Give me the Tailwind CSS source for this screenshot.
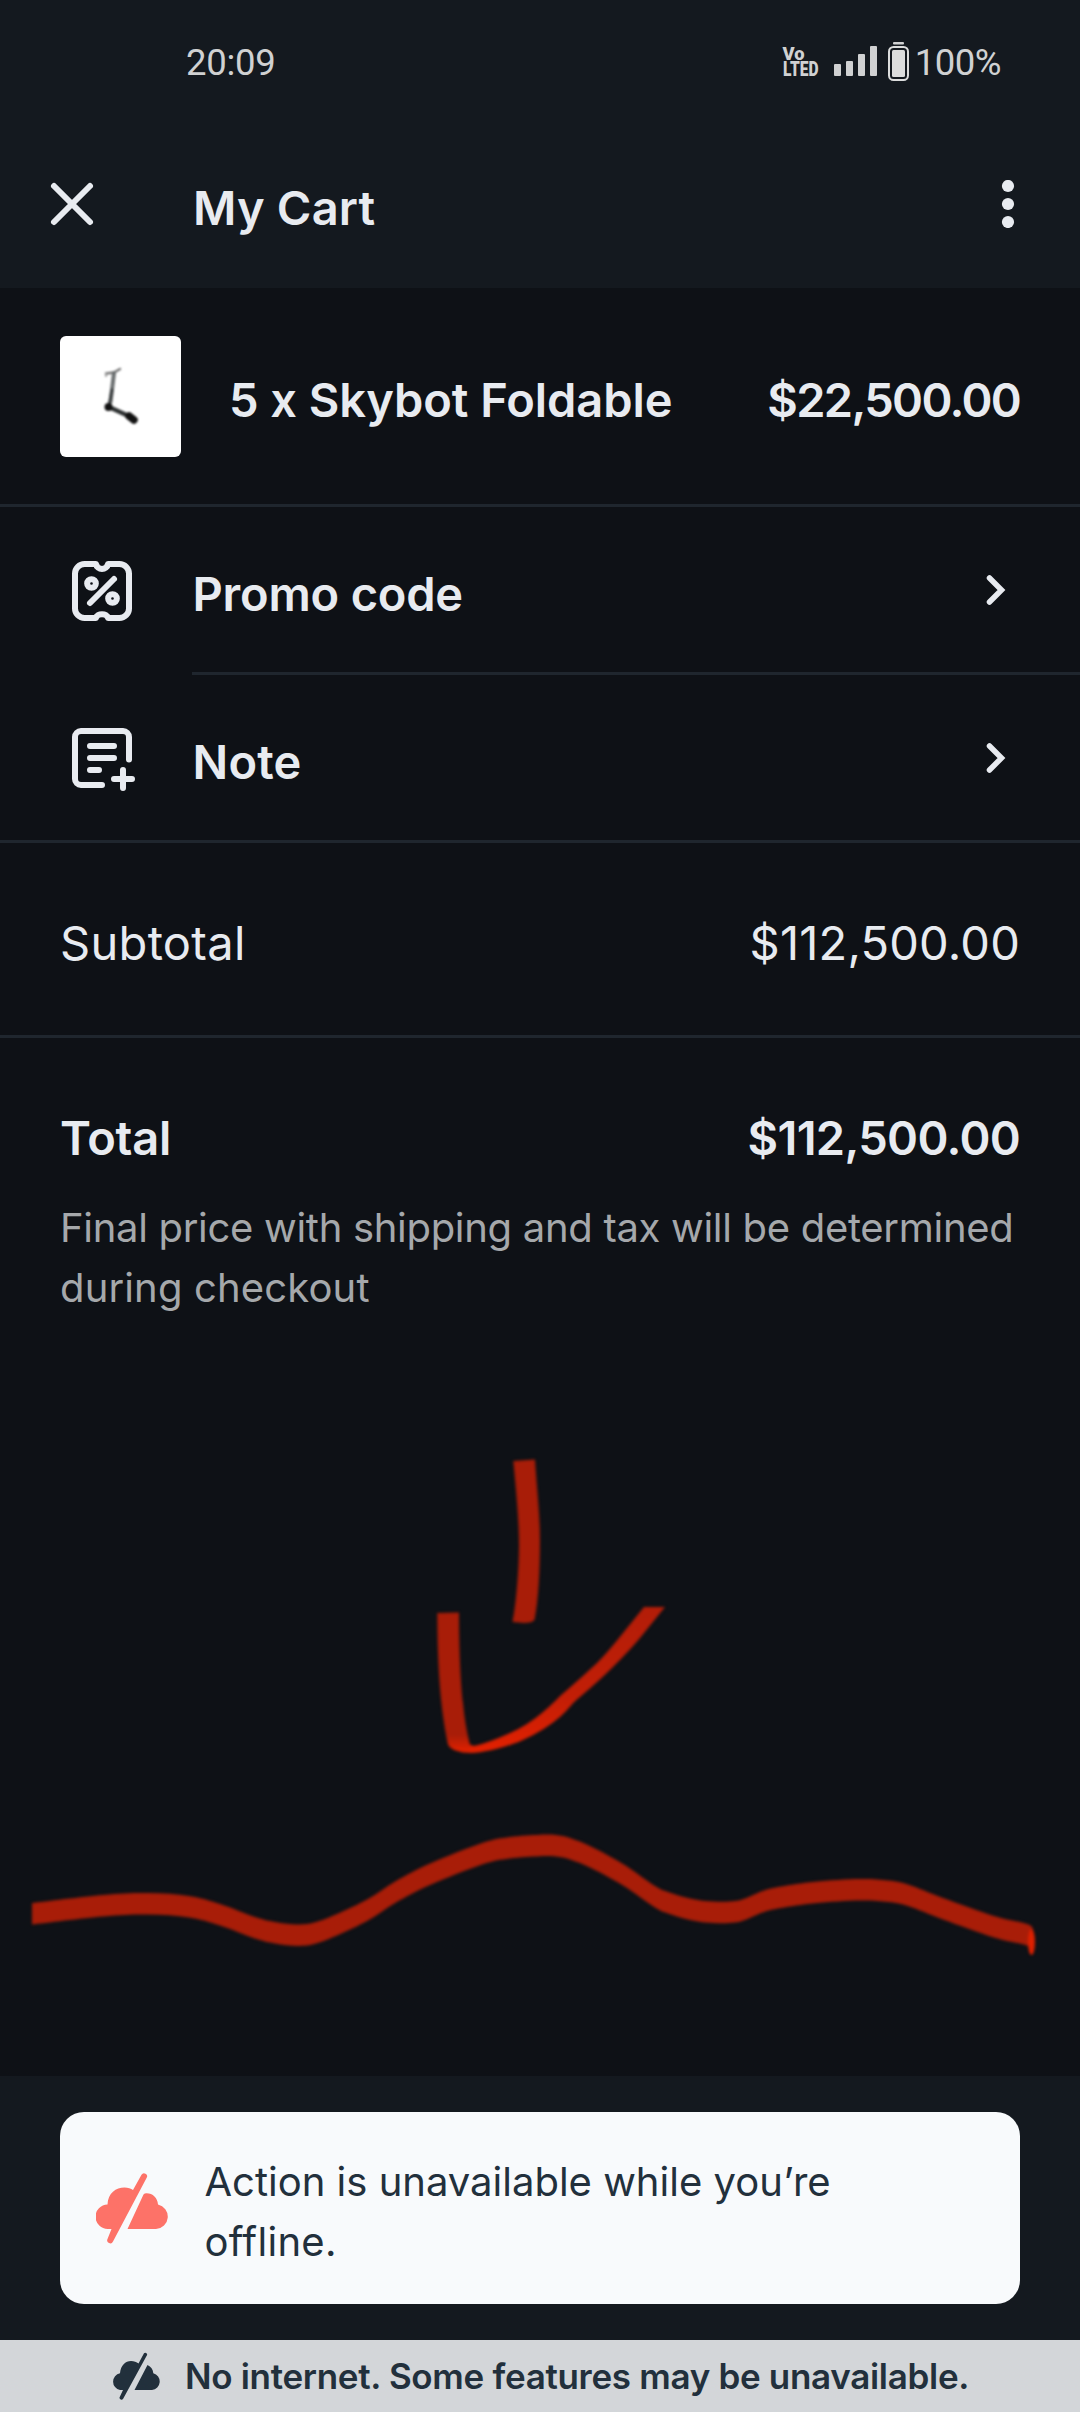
<!DOCTYPE html>
<html lang="en">
<head>
<meta charset="utf-8">
<meta name="viewport" content="width=device-width, initial-scale=1">
<title>My Cart</title>
<script src="https://cdn.jsdelivr.net/npm/@tailwindcss/browser@4"></script>
</head>
<body class="bg-[#0e1116]">
<div class="relative flex h-[2412px] w-[1080px] flex-col overflow-hidden bg-[#0e1116] font-['Inter',sans-serif] text-[47px] leading-[60px] text-[#e8ebf0]">

  <!-- Status bar -->
  <div class="flex h-[125px] shrink-0 items-center justify-between bg-[#14191f] pl-[186px] pr-[79px] font-['Roboto',sans-serif] text-[36.5px] leading-none text-[#d0d1d2]">
    <span class="mt-px tracking-[-0.3px]">20:09</span>
    <div class="flex items-center">
      <svg width="134" height="46" viewBox="780 40 134 46" fill="#d0d1d2" font-family="Roboto" font-weight="900">
        <text x="781.5" y="59.500" font-size="19" textLength="22" lengthAdjust="spacingAndGlyphs">Vo</text>
        <text x="782" y="76" font-size="20" textLength="35.5" lengthAdjust="spacingAndGlyphs">LTED</text>
        <rect x="833" y="64" width="7" height="12" rx="1"/>
        <rect x="845" y="61" width="7" height="15" rx="1"/>
        <rect x="857" y="54" width="7" height="22" rx="1"/>
        <rect x="869" y="46" width="7" height="30" rx="1"/>
        <rect x="892" y="42" width="11" height="2.4" rx="1"/>
        <rect x="888" y="47" width="19" height="33" rx="4.5" fill="none" stroke="#dcdddd" stroke-width="2"/>
        <rect x="891" y="50" width="13" height="27" rx="1.5" fill="#dcdddd"/>
      </svg>
      <span class="mt-px tracking-[-0.5px]">100%</span>
    </div>
  </div>

  <!-- Title bar -->
  <header class="flex h-[163px] shrink-0 items-center bg-[#14191f] pl-12 pr-[60px]">
    <svg class="mb-[5px]" width="48" height="48" viewBox="0 0 48 48" fill="none" stroke="#e8ebf0" stroke-width="6" stroke-linecap="round"><path d="M6 6l36 36M42 6L6 42"/></svg>
    <h1 class="ml-[97px] mt-[3px] font-semibold tracking-[0.200px]">My Cart</h1>
    <svg class="mb-[5px] ml-auto" width="24" height="48" viewBox="0 0 24 48" fill="#e8ebf0"><circle cx="12" cy="6" r="6.1"/><circle cx="12" cy="24" r="6.1"/><circle cx="12" cy="42" r="6.1"/></svg>
  </header>

  <!-- Cart line -->
  <div class="flex h-[219px] shrink-0 items-center border-b-[3px] border-[#1f262e] px-[60px] font-semibold">
    <div class="size-[121px] overflow-hidden rounded-md bg-white">
      <svg width="121" height="121" viewBox="0 0 121 121" fill="none" stroke-linecap="round">
        <g style="filter:blur(1.1px)">
          <path d="M46 37.500L54 36.500L60 33" stroke="#777" stroke-width="2.500"/>
          <path d="M46 37v3" stroke="#999" stroke-width="2"/>
          <path d="M54 37L50.500 66" stroke="#6b6f70" stroke-width="4"/>
          <path d="M52 54L49 70" stroke="#3d4142" stroke-width="3"/>
          <path d="M49 71L73 82" stroke="#2e3132" stroke-width="4.500"/>
          <circle cx="48.500" cy="71" r="4" fill="#111"/>
          <path d="M69 80L74 84" stroke="#111" stroke-width="7.500"/>
        </g>
      </svg>
    </div>
    <span class="ml-[48px] mt-2 tracking-[-0.050px]">5 x Skybot Foldable</span>
    <span class="ml-auto mt-2 tracking-[-1.7px]">$22,500.00</span>
  </div>

  <!-- Promo code -->
  <div class="flex h-[165px] shrink-0 items-center pl-[66px] pr-[69px] font-semibold">
    <svg class="mt-[2px]" width="72" height="72" viewBox="0 0 24 24" fill="none" stroke="#e8ebf0" stroke-width="2" stroke-linecap="round" stroke-linejoin="round">
      <path d="M10 3H6.200A3.200 3.200 0 0 0 3 6.200V17.800A3.200 3.200 0 0 0 6.200 21H10C10.300 19.300 13.700 19.300 14 21H17.800A3.200 3.200 0 0 0 21 17.800V6.200A3.200 3.200 0 0 0 17.800 3H14C13.700 5.200 10.300 5.200 10 3Z"/>
      <path d="M16 8l-8 8"/><circle cx="8.500" cy="9.500" r="1.450"/><circle cx="15.500" cy="14.500" r="1.450"/>
    </svg>
    <span class="ml-[54.500px] mt-2 tracking-[-0.2px]">Promo code</span>
    <svg class="mt-px ml-auto" width="30" height="36" viewBox="0 0 30 36" fill="none" stroke="#e8ebf0" stroke-width="5.500" stroke-linecap="round" stroke-linejoin="miter"><path d="M8.500 6L20.500 18L8.500 30"/></svg>
  </div>
  <div class="ml-48 h-[3px] shrink-0 bg-[#1f262e]"></div>

  <!-- Note -->
  <div class="flex h-[168px] shrink-0 items-center border-b-[3px] border-[#1f262e] pl-[66px] pr-[69px] font-semibold">
    <svg class="mt-px" width="72" height="72" viewBox="0 0 24 24" fill="none" stroke="#e8ebf0" stroke-width="2" stroke-linecap="round" stroke-linejoin="round">
      <path d="M12 21H5A2 2 0 0 1 3 19V5A2 2 0 0 1 5 3H19A2 2 0 0 1 21 5V12.500M8 8H16M8 12H16M8 16H11M19 16V22M16 19H22"/>
    </svg>
    <span class="ml-[54.500px] mt-[9px] tracking-[0.200px]">Note</span>
    <svg class="mt-px ml-auto" width="30" height="36" viewBox="0 0 30 36" fill="none" stroke="#e8ebf0" stroke-width="5.500" stroke-linecap="round" stroke-linejoin="miter"><path d="M8.500 6L20.500 18L8.500 30"/></svg>
  </div>

  <!-- Subtotal -->
  <div class="flex h-[195px] shrink-0 items-center justify-between border-b-[3px] border-[#1f262e] px-[60px]">
    <span class="mt-2 tracking-[0.300px]">Subtotal</span>
    <span class="mt-2 tracking-[0.200px]">$112,500.00</span>
  </div>

  <!-- Total -->
  <div class="flex flex-1 flex-col px-[60px] pt-[70px]">
    <div class="flex justify-between font-semibold">
      <span class="tracking-[-0.200px]">Total</span>
      <span class="tracking-[-0.700px]">$112,500.00</span>
    </div>
    <p class="mt-[30px] text-[40px] tracking-[-0.300px] text-[#a5a8ab]">Final price with shipping and tax will be determined<br><span class="tracking-[0.150px]">during checkout</span></p>
  </div>

  <!-- Offline toast -->
  <div class="h-[264px] shrink-0 bg-[#14191f] px-[60px] py-9">
    <div class="flex h-48 items-center rounded-3xl bg-[#f8fafc] pl-9 text-[#22303c]">
      <svg class="mt-px" width="72" height="72" viewBox="0 0 72 72" fill="#fd7268">
        <path d="M15.500 56H12A12 12 0 0 1 11.500 31.500C12 20 20 14.500 28.500 14.500C32 14.500 35 15.500 37 17L45.500 1.800A3 3 0 0 1 50.800 4.600L17 68.500A3 3 0 0 1 11.500 66Z"/>
        <path d="M31.500 56L47.500 21.500Q48.500 20.300 50.500 20.300C57 20.300 61.500 25 62 31.500A12.400 12.400 0 0 1 60 56Z"/>
      </svg>
      <p class="ml-[36.500px] mt-2 text-[40px] leading-[60px]">Action is unavailable while you’re<br><span class="tracking-[0.300px]">offline.</span></p>
    </div>
  </div>

  <!-- Connection banner -->
  <div class="flex h-[72px] shrink-0 items-center bg-[#d3d6d9] pl-28 text-[35px] font-semibold text-[#22303c]">
    <svg width="48" height="48" viewBox="0 0 48 48" fill="#22303c">
      <path d="M11 38H8A8.500 8.500 0 0 1 8 21.300C8.500 13.500 13.500 9 19 9C22 9 24.500 10 26.500 11.500L32 1.200A2 2 0 0 1 35.200 2.800L11 47A2 2 0 0 1 7.500 45.500Z"/>
      <path d="M22.500 38L35.500 13C39 14.500 41 17.500 41.300 21.300A8.500 8.500 0 0 1 40 38Z"/>
    </svg>
    <span class="ml-[25px] tracking-[-0.310px]">No internet. Some features may be unavailable.</span>
  </div>

  <!-- Freehand markup drawn over the page -->
  <svg class="pointer-events-none absolute left-0 top-[1440px]" width="1080" height="540" viewBox="0 1440 1080 540">
    <defs>
      <linearGradient id="arm" gradientUnits="userSpaceOnUse" x1="0" y1="1610" x2="0" y2="1752"><stop offset="0" stop-color="#b31d08"/><stop offset=".6" stop-color="#c11e06"/><stop offset="1" stop-color="#e22000"/></linearGradient>
      <linearGradient id="left" gradientUnits="userSpaceOnUse" x1="0" y1="1735" x2="0" y2="1750"><stop offset="0" stop-color="#a81d08"/><stop offset="1" stop-color="#dd2000"/></linearGradient>
    </defs>
    <g style="filter:blur(1.8px)">
      <path fill="#a81d08" d="M513.300 1461L535 1459.500C537 1490 540 1515 540 1540C540 1570 538.500 1600 534.500 1620Q532 1623 524 1623L512.500 1622C516 1605 519 1570 519 1545C519 1520 516 1490 513.300 1461Z"/>
      <path fill="url(#arm)" d="M447.700 1743Q452 1753 471.700 1753C482 1753 505 1748 523 1740Q545 1730 560 1717C570 1708 572 1703 580 1697Q600 1680 613 1667Q630 1650 640 1638L665 1607H644L623 1633Q608 1652 597 1663Q582 1677 567 1690C557 1698 552 1705 543 1712Q528 1725 510 1733Q488 1743 475 1745.700Q470 1746 469 1743Z"/>
      <path fill="url(#left)" d="M437.300 1613L459 1612.500C459 1635 460 1680 463 1703Q465 1725 469.500 1743L471 1751Q450 1753 447.700 1743C440 1705 437.500 1665 437.300 1613Z"/>
      <path id="wave" fill="#a81d08"/>
      <ellipse cx="1031.500" cy="1942" rx="3.500" ry="13" fill="#df2000"/>
    </g>
  </svg>
</div>
<script>
  // Upper edge of the wavy stroke; the brush is 22px tall everywhere along it.
  const edge = [[32,1903],[103,1895],[148,1893],[189,1896],[220,1904],[255,1917],[275,1922],[298,1924.5],[316,1922],[337,1914],[368,1899],[396,1881],[430,1863.5],[482,1843],[510,1837],[540,1834.7],[556,1835],[570,1838],[592,1847],[623,1864],[655,1886],[668,1892],[688,1898],[705,1901],[722,1901.7],[735,1901],[745,1898.5],[764,1890.5],[781,1886.5],[815,1881.7],[860,1879],[888,1880.500],[908,1884.500],[943,1898],[994,1916],[1027,1924],[1033,1929]];
  const spline = p => p.slice(1).map((b, i) => {
    const a = p[i], z = p[i - 1] || a, n = p[i + 2] || b;
    return `C${a[0] + (b[0] - z[0]) / 6} ${a[1] + (b[1] - z[1]) / 6} ${b[0] - (n[0] - a[0]) / 6} ${b[1] - (n[1] - a[1]) / 6} ${b[0]} ${b[1]}`;
  }).join('');
  const lower = edge.map(([x, y]) => [x, y + 21.5]).reverse();
  document.getElementById('wave').setAttribute('d', `M${edge[0]}${spline(edge)}L${lower[0]}${spline(lower)}Z`);
</script>
</body>
</html>
